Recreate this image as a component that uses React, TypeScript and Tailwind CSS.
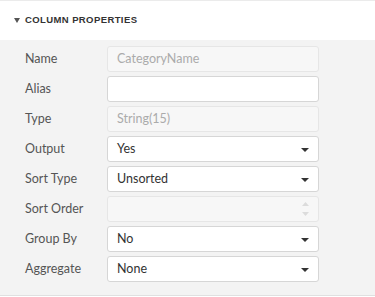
import React from "react";

const Caret = () => (
  <svg width="8" height="4" viewBox="0 0 8 4" className="absolute right-[9px] top-[11px]">
    <path d="M0 0 H8 L4 4 Z" fill="#333" />
  </svg>
);

const Spinner = () => (
  <div className="absolute right-[9px] top-[5px] flex flex-col gap-[6px]">
    <svg width="7" height="4" viewBox="0 0 7 4"><path d="M0 4 H7 L3.5 0 Z" fill="#dcdcdc" /></svg>
    <svg width="7" height="4" viewBox="0 0 7 4"><path d="M0 0 H7 L3.5 4 Z" fill="#dcdcdc" /></svg>
  </div>
);

type Kind = "disabled" | "text" | "select" | "number";

const Field = ({ kind, value }: { kind: Kind; value?: string }) => {
  const disabled = kind === "disabled" || kind === "number";
  return (
    <div
      className={`relative h-[26px] w-[212px] rounded-[3px] border flex items-center pl-[9px] text-[12.5px] ${
        disabled ? "bg-[#f7f7f7] border-[#e6e6e6] text-[#ababab]" : "bg-white border-[#d6d6d6] text-[#333]"
      }`}
    >
      <span>{value}</span>
      {kind === "select" && <Caret />}
      {kind === "number" && <Spinner />}
    </div>
  );
};

const rows: { label: string; kind: Kind; value?: string }[] = [
  { label: "Name", kind: "disabled", value: "CategoryName" },
  { label: "Alias", kind: "text" },
  { label: "Type", kind: "disabled", value: "String(15)" },
  { label: "Output", kind: "select", value: "Yes" },
  { label: "Sort Type", kind: "select", value: "Unsorted" },
  { label: "Sort Order", kind: "number" },
  { label: "Group By", kind: "select", value: "No" },
  { label: "Aggregate", kind: "select", value: "None" },
];

export default function App() {
  return (
    <div className="w-[375px] h-[297px] bg-white font-['Lato',sans-serif] border-t border-[#ebebeb]">
      <div className="h-[39px] flex items-center pl-[14px] gap-[5px] bg-white">
        <svg width="6" height="5" viewBox="0 0 6 5"><path d="M0 0 H6 L3 5 Z" fill="#555" /></svg>
        <span className="text-[9.5px] font-bold tracking-[0.4px] text-[#333] font-['Liberation_Sans',sans-serif]">
          COLUMN PROPERTIES
        </span>
      </div>
      <div className="bg-[#f3f3f3] h-[256px] border-b border-[#e0e0e0] pt-[6px] flex flex-col gap-[4px]">
        {rows.map((r) => (
          <div key={r.label} className="flex items-center h-[26px]">
            <div className="w-[107px] pl-[25px] text-[12.5px] text-[#555]">{r.label}</div>
            <Field kind={r.kind} value={r.value} />
          </div>
        ))}
      </div>
    </div>
  );
}
